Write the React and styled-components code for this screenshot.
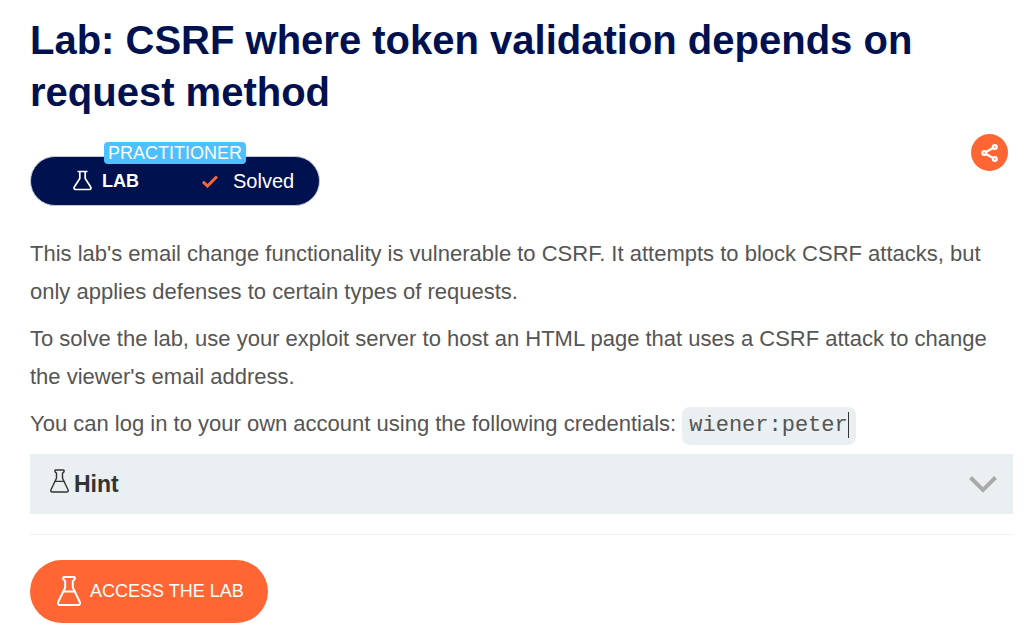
import React, { useState } from "react";
import styled, { createGlobalStyle } from "styled-components";

const navy = "#00114f";
const orange = "#ff6633";
const pale = "#eaeff2";

const GlobalStyle = createGlobalStyle`
  * { box-sizing: border-box; }
  body {
    margin: 0;
    background: #fff;
    color: #555;
    font-family: Arial, "Liberation Sans", sans-serif;
    font-size: 22px;
    line-height: 38px;
  }
`;

const Page = styled.main`
  padding: 14px 12px 6px 30px;
`;

const Title = styled.h1`
  margin: 0;
  color: ${navy};
  font-size: 40px;
  line-height: 52px;
`;

const StatusRow = styled.div`
  display: flex;
  align-items: flex-start;
  justify-content: space-between;
  margin-top: 16px;
  padding-right: 5px;
`;

const StatusPill = styled.div`
  position: relative;
  display: flex;
  align-items: center;
  width: 290px;
  height: 50px;
  margin-top: 22px;
  padding-left: 42px;
  border: 1px solid #c5c8d4;
  border-radius: 25px;
  background: ${navy};
  color: #fff;
  font-size: 20px;
`;

const Level = styled.span`
  position: absolute;
  top: -15px;
  left: 73px;
  padding: 0 4px;
  border-radius: 4px;
  background: #4dc0ff;
  font-size: 18px;
  line-height: 22px;
`;

const Kind = styled.strong`
  width: 100px;
  margin-left: 10px;
  font-size: 18px;
`;

const Solved = styled.span`
  margin-left: 15px;
`;

const ShareButton = styled.button`
  display: grid;
  place-items: center;
  width: 37px;
  height: 37px;
  padding: 0;
  border: 0;
  border-radius: 50%;
  background: ${orange};
  color: #fff;
`;

const Description = styled.section`
  margin-top: 29px;
`;

const Paragraph = styled.p`
  margin: 0 0 9px;
`;

const Credentials = styled.code`
  display: inline-block;
  margin-top: 2px;
  padding: 0 7px;
  border-radius: 8px;
  background: ${pale};
  font-family: "Courier New", "Liberation Mono", monospace;
  font-size: 22px;
  vertical-align: top;
`;

const Caret = styled.span`
  display: inline-block;
  width: 1px;
  height: 26px;
  background: #333;
  vertical-align: middle;
`;

const HintButton = styled.button`
  display: flex;
  align-items: center;
  width: 100%;
  height: 60px;
  padding: 0 16px 0 20px;
  border: 0;
  background: ${pale};
  color: #333332;
  font-family: inherit;
  font-size: 23px;
  font-weight: bold;
  text-align: left;

  svg:first-child {
    margin-bottom: 6px;
  }
`;

const HintLabel = styled.span`
  flex: 1;
  margin-left: 5px;
`;

const HintText = styled.p`
  margin: 0;
  padding: 8px 20px;
  background: ${pale};
`;

const Divider = styled.hr`
  margin: 20px 0 25px;
  border: 0;
  border-top: 1px solid #f0f0f1;
`;

const AccessLink = styled.a`
  display: inline-flex;
  align-items: center;
  gap: 9px;
  height: 63px;
  padding: 0 24px 2px 27px;
  border-radius: 32px;
  background: ${orange};
  color: #fff;
  font-size: 18px;
  text-decoration: none;
`;

function SmallFlask() {
  return (
    <svg width="19" height="22" viewBox="0 0 19 22" fill="none" stroke="currentColor" strokeWidth="1.7" strokeLinejoin="round" aria-hidden="true">
      <path d="M4.5 1.500h10M6.800 1.500v7L1.300 17Q.5 19.500 2.500 19.500h14q2 0 1.200-2.500L12.200 8.500V1.500" />
    </svg>
  );
}

function Flask({ width, height, stroke }) {
  return (
    <svg width={width} height={height} viewBox="0 0 24 30" fill="none" stroke="currentColor" strokeWidth={stroke} strokeLinejoin="round" strokeLinecap="round" aria-hidden="true">
      <path d="M7 1h10q1 0 .8 1.500T15.800 5v6.500L22.800 26q.8 3-1.800 3H3q-2.600 0-1.800-3L8.200 11.500V5Q6.400 4 6.200 2.500T7 1z" />
      <path d="M6.500 15.500h11" />
    </svg>
  );
}

function Check() {
  return (
    <svg width="16" height="13" viewBox="0 0 16 13" fill="none" stroke={orange} strokeWidth="3" aria-hidden="true">
      <path d="M1 6.800l4.500 4.200L15 1.500" />
    </svg>
  );
}

function ShareIcon() {
  return (
    <svg width="17" height="18" viewBox="0 0 17 18" fill="none" stroke="currentColor" strokeWidth="2.200" aria-hidden="true">
      <path d="M5 8l7-4M5 10l7 4" />
      <circle cx="3.200" cy="9" r="1.900" />
      <circle cx="13.800" cy="3" r="1.900" />
      <circle cx="13.800" cy="15" r="1.900" />
    </svg>
  );
}

function Chevron() {
  return (
    <svg width="28" height="17" viewBox="0 0 28 17" fill="none" stroke="#aaa" strokeWidth="4" aria-hidden="true">
      <path d="M1.500 1.500L14 14L26.500 1.500" />
    </svg>
  );
}

export default function App() {
  const [open, setOpen] = useState(false);
  return (
    <>
      <GlobalStyle />
      <Page>
        <Title>Lab: CSRF where token validation depends on request method</Title>
        <StatusRow>
          <StatusPill>
            <Level>PRACTITIONER</Level>
            <SmallFlask />
            <Kind>LAB</Kind>
            <Check />
            <Solved>Solved</Solved>
          </StatusPill>
          <ShareButton type="button" aria-label="Share">
            <ShareIcon />
          </ShareButton>
        </StatusRow>
        <Description>
          <Paragraph>
            This lab's email change functionality is vulnerable to CSRF. It attempts to block CSRF attacks, but only applies defenses to certain types of requests.
          </Paragraph>
          <Paragraph>
            To solve the lab, use your exploit server to host an HTML page that uses a CSRF attack to change the viewer's email address.
          </Paragraph>
          <Paragraph>
            You can log in to your own account using the following credentials:{" "}
            <Credentials>wiener:peter<Caret /></Credentials>
          </Paragraph>
        </Description>
        <HintButton type="button" aria-expanded={open} onClick={() => setOpen(!open)}>
          <Flask width={19} height={24} stroke={1.8} />
          <HintLabel>Hint</HintLabel>
          <Chevron />
        </HintButton>
        {open && <HintText>Hint</HintText>}
        <Divider />
        <AccessLink href="#lab">
          <Flask width={24} height={30} stroke={2} />
          ACCESS THE LAB
        </AccessLink>
      </Page>
    </>
  );
}
